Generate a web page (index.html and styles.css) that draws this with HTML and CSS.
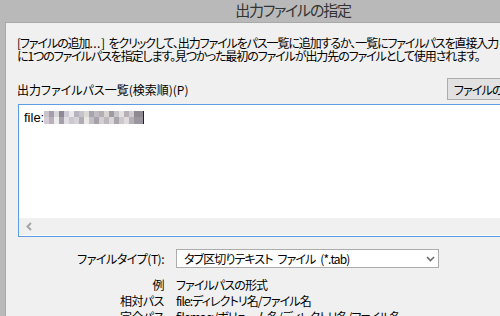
FILE: index.html
```html
<!DOCTYPE html>
<html lang="ja">
<head>
    <meta charset="UTF-8">
    <meta name="viewport" content="width=device-width, initial-scale=1.0">
    <title>出力ファイルの指定</title>
    <link rel="stylesheet" href="styles.css">
</head>
<body>

    <div class="window">
        <!-- Title bar -->
        <div class="titlebar">出力ファイルの指定</div>

        <div class="frame">
            <div class="panel">
                <p class="intro">[ファイルの追加<span class="dots">...</span>] をクリックして、出力ファイルをパス一覧に追加するか、一覧にファイルパスを直接入力<br>に1つのファイルパスを指定します。見つかった最初のファイルが出力先のファイルとして使用されます。</p>

                <div class="list-head">
                    <label class="list-label">出力ファイルパス一覧(検索順)(P)</label>
                    <button class="btn">ファイルの追加...</button>
                </div>

                <!-- Path list -->
                <div class="listbox">
                    <div class="list-body">
                        <div class="item">file:<span class="masked"></span><span class="caret"></span></div>
                    </div>
                    <div class="hscroll">
                        <svg class="arrow-left" width="8" height="9" viewBox="0 0 8 9">
                            <path d="M6 1 L2.5 4.5 L6 8" fill="none" stroke="#a6a6a6" stroke-width="2"/>
                        </svg>
                    </div>
                </div>

                <!-- File type + examples -->
                <div class="form">
                    <div class="form-label">ファイルタイプ(T):</div>
                    <div class="combo">
                        <span>タブ区切りテキスト ファイル (*.tab)</span>
                        <svg class="chevron" width="9" height="6" viewBox="0 0 9 6">
                            <path d="M1 1 L4.5 4.5 L8 1" fill="none" stroke="#6d6d6d" stroke-width="1.6"/>
                        </svg>
                    </div>

                    <div class="form-label ex first">例</div>
                    <div class="ex first">ファイルパスの形式</div>

                    <div class="form-label ex">相対パス</div>
                    <div class="ex">file:ディレクトリ名/ファイル名</div>

                    <div class="form-label ex">完全パス</div>
                    <div class="ex">filemac:/ボリューム名/ディレクトリ名/ファイル名</div>
                </div>
            </div>
        </div>
    </div>

</body>
</html>
```

FILE: styles.css
```css
/* General Styles */
:root {
    --frame-grey: #b9b9b9;
    --panel-bg: #f0f0f0;
    --panel-edge: #a9a9a9;
    --focus-blue: #5a9de2;
    --control-border: #acacac;
    --button-bg: #e1e1e1;
}

* {
    box-sizing: border-box;
}

html, body {
    margin: 0;
    padding: 0;
}

body {
    width: 500px;
    height: 316px;
    overflow: hidden;
    background-color: var(--frame-grey);
    font-family: "Noto Sans CJK JP", "Noto Sans", sans-serif;
    font-size: 12px;
    font-feature-settings: "palt";
    letter-spacing: -0.9px;
    word-spacing: 3px;
    color: #000;
}

.window {
    width: 586px;
}

/* Title bar */
.titlebar {
    height: 22px;
    line-height: 20px;
    text-align: center;
    font-size: 15px;
    letter-spacing: -1.2px;
    color: #333;
}

.frame {
    padding: 0 5px;
}

.panel {
    background-color: var(--panel-bg);
    border-top: 1px solid var(--panel-edge);
    border-left: 1px solid var(--panel-edge);
    padding: 13px 11px 0 11px;
    height: 320px;
}

.intro {
    margin: 0;
    line-height: 13px;
    letter-spacing: -1.1px;
    white-space: nowrap;
}

.dots {
    letter-spacing: 0.5px;
}

/* List header */
.list-head {
    display: flex;
    justify-content: space-between;
    align-items: flex-start;
    margin-top: 16px;
}

.list-label {
    margin-top: 5px;
    line-height: 13px;
    letter-spacing: 0;
}

.btn {
    height: 22px;
    padding: 0 6px;
    font: inherit;
    letter-spacing: inherit;
    background-color: var(--button-bg);
    border: 1px solid var(--control-border);
    color: #000;
    width: 123px;
    text-align: left;
}

/* Path list */
.listbox {
    margin: 4px 0 0 1px;
    height: 133px;
    border: 1px solid var(--focus-blue);
    background-color: #fff;
    display: flex;
    flex-direction: column;
    padding-bottom: 1px;
}

.list-body {
    flex-grow: 1;
    padding: 5px 5px 0 5px;
}

.item {
    display: flex;
    align-items: center;
    line-height: 15px;
    font-family: "Liberation Sans", sans-serif;
    font-size: 13px;
    letter-spacing: 0;
}

.masked {
    display: inline-block;
    width: 99px;
    height: 13px;
    background:
        linear-gradient(90deg,
            #c9c3cb 0 5px, #a79caa 5px 10px, #d9d6dc 10px 15px, #8e8894 15px 20px,
            #cfcad3 20px 25px, #e9e8ea 25px 30px, #b8b2bc 30px 35px, #c6c2ca 35px 40px,
            #dcdad6 40px 45px, #a8a4ae 45px 50px, #c0bcc4 50px 55px, #b2aeb4 55px 60px,
            #d8d4d2 60px 65px, #9e9aa2 65px 70px, #c9c4c8 70px 75px, #e4e0e2 75px 80px,
            #b6b0b6 80px 85px, #cfccd0 85px 90px, #8f8a92 90px 99px) top / 100% 6px no-repeat,
        linear-gradient(90deg,
            #d4ced4 0 5px, #bab0bc 5px 10px, #ececea 10px 15px, #a6a0ac 15px 20px,
            #e2dfe4 20px 25px, #cdc8d0 25px 30px, #d6d2d8 30px 35px, #b0acb4 35px 40px,
            #ebe9e4 40px 45px, #c2bec6 45px 50px, #a7a2a9 50px 55px, #d2ced2 55px 60px,
            #bcb8bd 60px 65px, #d9d5d6 65px 70px, #aaa5ab 70px 75px, #cdc8cb 75px 80px,
            #e0dcdc 80px 85px, #b4b0b6 85px 90px, #9a969e 90px 99px) bottom / 100% 7px no-repeat;
}

.caret {
    display: inline-block;
    width: 1px;
    height: 13px;
    background-color: #222;
}

.hscroll {
    height: 17px;
    background-color: var(--panel-bg);
    display: flex;
    align-items: center;
    padding-left: 6px;
}

/* File type form */
.form {
    display: grid;
    grid-template-columns: 147px 263px;
    column-gap: 12px;
    margin-top: 12px;
}

.form-label {
    text-align: right;
    line-height: 19px;
    letter-spacing: -0.5px;
}

.combo {
    height: 19px;
    border: 1px solid var(--control-border);
    background-color: #fff;
    display: flex;
    align-items: center;
    justify-content: space-between;
    padding: 0 3px 0 7px;
    line-height: 17px;
}

.ex {
    line-height: 16px;
}

.ex.first {
    margin-top: 9px;
}
```
